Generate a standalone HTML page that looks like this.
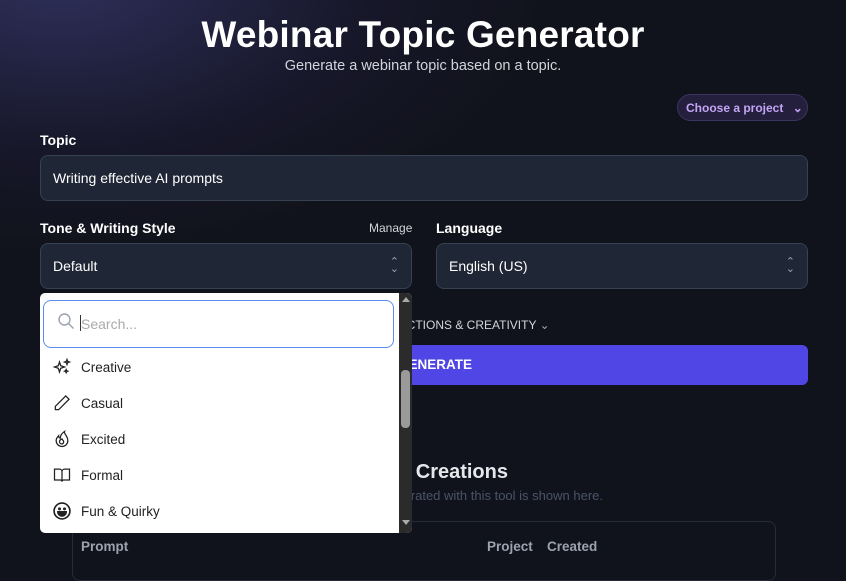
<!DOCTYPE html>
<html><head><meta charset="utf-8"><style>
*{box-sizing:border-box;margin:0;padding:0}
body{width:846px;height:572px;overflow:hidden;background:#11131c;font-family:"Liberation Sans",sans-serif;color:#fff;position:relative}
.glow{position:absolute;left:-150px;top:-200px;width:700px;height:450px;background:radial-gradient(ellipse at 30% 40%,rgba(70,70,140,.55),rgba(40,35,80,.25) 45%,rgba(17,19,28,0) 70%)}
.a{position:absolute;white-space:nowrap}
h1{position:absolute;left:0;width:846px;top:14px;text-align:center;font-size:37px;font-weight:900;letter-spacing:.2px}
.sub{left:0;width:846px;top:58px;text-align:center;font-size:14.5px;color:#d1d5db}
.pill{left:677px;top:94px;width:131px;height:27px;border:1px solid #3b3560;border-radius:14px;background:#241f3d;color:#c4a5f5;font-size:12px;font-weight:bold;padding:6px 0 0 8px}
.lbl{font-size:14px;font-weight:bold;color:#fff}
.inp{background:#1f2635;border:1px solid #374151;border-radius:8px;font-size:14px;color:#fff;padding:0 12px;display:flex;align-items:center}
.dd{left:40px;top:293px;width:372px;height:240px;background:#fff;border-radius:5px;overflow:hidden}
.sb{position:absolute;right:0;top:0;width:13px;height:240px;background:#2b2b2b}
.item{position:absolute;left:12px;font-size:13.5px;color:#222;display:flex;align-items:center;gap:9px}
.item svg{width:20px;height:20px}
</style></head><body>
<div class="glow"></div>
<h1>Webinar Topic Generator</h1>
<div class="a sub">Generate a webinar topic based on a topic.</div>
<div class="a pill">Choose a project <span style="margin-left:6px">&#8964;</span></div>
<div class="a lbl" style="left:40px;top:132px">Topic</div>
<div class="a inp" style="left:40px;top:155px;width:768px;height:46px">Writing effective AI prompts</div>
<div class="a lbl" style="left:40px;top:220px">Tone &amp; Writing Style</div>
<div class="a" style="left:369px;top:221px;font-size:12px;color:#d1d5db">Manage</div>
<div class="a inp" style="left:40px;top:243px;width:372px;height:46px">Default<span style="margin-left:auto;color:#9ca3af;font-size:11px;line-height:7px;text-align:center">&#8963;<br>&#8964;</span></div>
<div class="a lbl" style="left:436px;top:220px">Language</div>
<div class="a inp" style="left:436px;top:243px;width:372px;height:46px">English (US)<span style="margin-left:auto;color:#9ca3af;font-size:11px;line-height:7px;text-align:center">&#8963;<br>&#8964;</span></div>
<div class="a" style="left:362px;top:318px;font-size:12px;color:#d1d5db">INSTRUCTIONS &amp; CREATIVITY <span style="color:#9ca3af">&#8964;</span></div>
<div class="a" style="left:300px;top:345px;width:508px;height:40px;background:#4f46e5;border-radius:6px;font-size:13.5px;font-weight:bold;padding:12px 0 0 98px">GENERATE</div>
<div class="a" style="right:338px;top:461px;font-size:20px;font-weight:bold;color:#e5e7eb">Your Previous Creations</div>
<div class="a" style="right:243px;top:488px;font-size:13px;color:#4b5369">Everything generated with this tool is shown here.</div>
<div class="a" style="left:72px;top:521px;width:704px;height:60px;border:1px solid #262b3a;border-radius:8px"></div>
<div class="a" style="left:81px;top:539px;font-size:13.5px;color:#9ca3af;font-weight:bold">Prompt</div>
<div class="a" style="left:487px;top:539px;font-size:13.5px;color:#9ca3af;font-weight:bold">Project</div>
<div class="a" style="left:547px;top:539px;font-size:13.5px;color:#9ca3af;font-weight:bold">Created</div>
<div class="a dd">
 <div class="a" style="left:3px;top:7px;width:351px;height:48px;border:1.5px solid #5b8def;border-radius:8px"></div>
 <svg class="a" style="left:17px;top:19px" width="18" height="18" viewBox="0 0 18 18" fill="none" stroke="#9ca3af" stroke-width="1.4"><circle cx="7.5" cy="7.5" r="5.5"/><path d="M11.5 11.5l5 5"/></svg>
 <div class="a" style="left:40px;top:22px;width:1px;height:16px;background:#333"></div>
 <div class="a" style="left:41px;top:23px;font-size:14px;color:#aaa">Search...</div>
 <div class="item" style="top:64px"><svg viewBox="0 0 24 24" fill="none" stroke="#222" stroke-width="1.5"><path d="M9 6l1.5 4.5L15 12l-4.5 1.5L9 18l-1.5-4.5L3 12l4.5-1.5z"/><path d="M18 3l.8 2.2L21 6l-2.2.8L18 9l-.8-2.2L15 6l2.2-.8zM17 15l.6 1.4 1.4.6-1.4.6L17 19l-.6-1.4L15 17l1.4-.6z"/></svg>Creative</div>
 <div class="item" style="top:100px"><svg viewBox="0 0 24 24" fill="none" stroke="#222" stroke-width="1.5"><path d="M16.5 3.5l4 4L8 20H4v-4z"/></svg>Casual</div>
 <div class="item" style="top:136px"><svg viewBox="0 0 24 24" fill="none" stroke="#222" stroke-width="1.5"><path d="M12 21a7 7 0 0 1-7-7c0-3 2-5 3-6 0 2 1 3 2 3 0-3 2-6 5-8-1 3 4 5 4 11a7 7 0 0 1-7 7z"/><path d="M12 18a3 3 0 0 1-3-3c0-1.5 1.5-2.5 3-3 0 1 2 1.5 2 3a3 3 0 0 1-2 3z"/></svg>Excited</div>
 <div class="item" style="top:172px"><svg viewBox="0 0 24 24" fill="none" stroke="#222" stroke-width="1.5"><path d="M3 5h6a3 3 0 0 1 3 3v12a2 2 0 0 0-2-2H3zM21 5h-6a3 3 0 0 0-3 3v12a2 2 0 0 1 2-2h7z"/></svg>Formal</div>
 <div class="item" style="top:208px"><svg viewBox="0 0 24 24" fill="none" stroke="#222" stroke-width="2"><circle cx="12" cy="12" r="9.5"/><circle cx="9" cy="9.5" r=".8" fill="#222"/><circle cx="15" cy="9.5" r=".8" fill="#222"/><path d="M7 13h10a5 5 0 0 1-10 0z" fill="#222"/></svg>Fun &amp; Quirky</div>
 <div class="sb"><div class="a" style="left:3px;top:4px;border:4px solid transparent;border-bottom:5px solid #aaa;border-top:0"></div><div class="a" style="left:2px;top:77px;width:9px;height:58px;background:#9a9a9a;border-radius:4px"></div><div class="a" style="left:3px;top:227px;border:4px solid transparent;border-top:5px solid #aaa;border-bottom:0"></div></div>
</div>
</body></html>
